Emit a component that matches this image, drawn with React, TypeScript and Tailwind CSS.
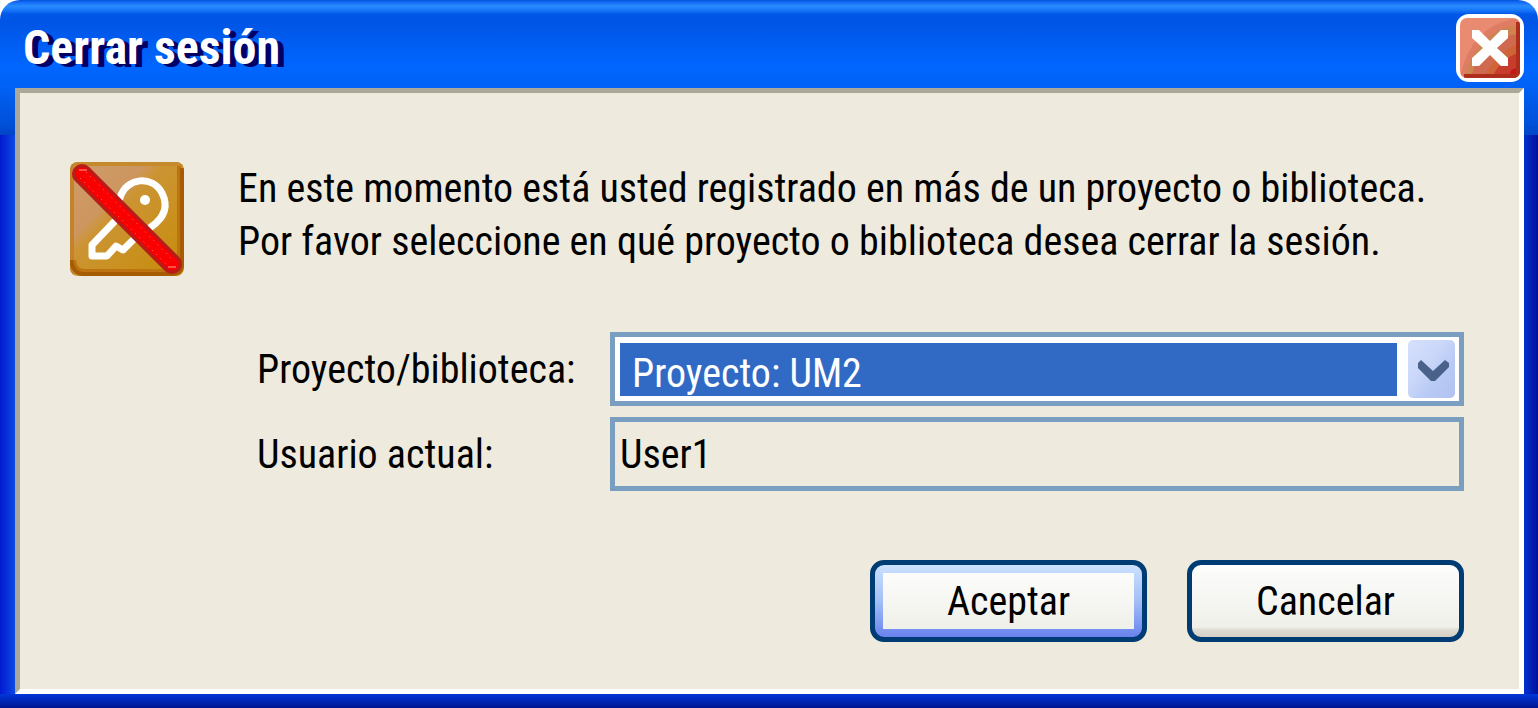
import { useState } from "react";

const sesiones = ["Proyecto: UM2"];

function KeyIcon() {
  return (
    <svg viewBox="0 0 114 114" className="size-[114px] shrink-0" aria-hidden="true">
      <defs>
        <linearGradient id="tile" x1="0" y1="0" x2="1" y2="1">
          <stop offset="0" stopColor="#c98a35" />
          <stop offset="0.12" stopColor="#cf9a66" />
          <stop offset="0.34" stopColor="#cd9660" />
          <stop offset="0.42" stopColor="#cc9433" />
          <stop offset="1" stopColor="#c68c08" />
        </linearGradient>
        <clipPath id="tileClip">
          <rect width="114" height="114" rx="8" />
        </clipPath>
      </defs>
      <g clipPath="url(#tileClip)">
        <rect width="114" height="114" fill="url(#tile)" />
        <path d="M0 2H114" stroke="#c48a2c" strokeWidth="4" />
        <path d="M2 0V114" stroke="#c4822a" strokeWidth="4" />
        <path d="M109 4V100Q109 109 100 109H14Q5 109 4 98" fill="none" stroke="#bd7410" strokeWidth="4" />
        <path d="M112 6V102Q112 112 102 112H12Q3 111 1 98" fill="none" stroke="#a55c02" strokeWidth="4" />
      </g>
      <g fill="none" stroke="#fff" strokeWidth="7" strokeLinejoin="round" strokeLinecap="round">
        <path d="M50 36C56 15 83 13 92 31C99 45 94 56 81 65" />
        <path d="M44 60L22 83V94H37L46 84L53 88L64 77" />
      </g>
      <circle cx="75" cy="38" r="5" fill="#fff" />
      <path d="M12 12L102 102" stroke="#b81b18" strokeWidth="20" strokeLinecap="round" />
      <path d="M12 12L102 102" stroke="#fb0000" strokeWidth="13" strokeLinecap="round" />
      <path d="M16 10L104 99M10 16L97 103" stroke="#ff7468" strokeWidth="1" strokeDasharray="1 5" />
      <path d="M9 8H17M98 105H106" stroke="#ffa090" strokeWidth="1" />
    </svg>
  );
}

function CloseIcon() {
  return (
    <svg viewBox="0 0 68 68" className="size-[68px]" aria-hidden="true">
      <defs>
        <clipPath id="closeClip">
          <rect x="4" y="4" width="60" height="60" rx="7" />
        </clipPath>
      </defs>
      <rect width="68" height="68" rx="13" fill="#fff" />
      <g clipPath="url(#closeClip)">
        <rect x="4" y="4" width="60" height="60" fill="#e98b71" />
        <path d="M4 64C10 32 28 8 64 4V64Z" fill="#de7d63" />
        <path d="M9 64C14 36 34 12 64 11V64Z" fill="#cf8350" />
        <path d="M15 64C20 42 35 22 64 20V64Z" fill="#cf694f" />
        <path d="M28 64C36 47 47 36 64 28V64Z" fill="#cf6536" />
        <path d="M36 64C42 50 50 43 64 38V64Z" fill="#c83c2d" />
        <path d="M54 61Q53 55 61 54V61Z" fill="#c71616" />
        <path d="M62 8V62H8" fill="none" stroke="#ae2d1b" strokeWidth="4" />
      </g>
      <path d="M16 16H23L34 27L45 16H52V24L41 34L52 44V52H45L34 41L23 52H16V44L27 34L16 24Z" fill="#fff" />
    </svg>
  );
}

function ArrowIcon() {
  return (
    <svg viewBox="0 0 47 58" className="h-[58px] w-[47px]" aria-hidden="true">
      <defs>
        <linearGradient id="arrowBg" x1="0" y1="0" x2="1" y2="1">
          <stop offset="0" stopColor="#d5e0fc" />
          <stop offset="0.4" stopColor="#cad7f9" />
          <stop offset="0.65" stopColor="#b9caf5" />
          <stop offset="1" stopColor="#b2c2f1" />
        </linearGradient>
      </defs>
      <rect width="47" height="58" rx="5" fill="url(#arrowBg)" />
      <path d="M10 23L13 20L25 31L37 20L41 23V27L27 41H23L10 28Z" fill="#4a628a" />
    </svg>
  );
}

export default function App() {
  const [sesion, setSesion] = useState(sesiones[0]);

  return (
    <div className="min-h-screen bg-white">
      <div className="flex min-h-screen flex-col rounded-t-[20px] bg-[linear-gradient(#0054d8,#1468f5_2px,#2a8cff_6px,#1878fa_10px,#0058e8_14px,#0055e5_22px,#0066ff_66px,#0062f6_85px,#0050d8_125px,#0044c8_135px),linear-gradient(#0038d8,#0026b8_7px,#001490_14px),linear-gradient(90deg,#001ad0,#0d4ae4_15px,#0030d0_calc(100%-14px),#00129a)] bg-[size:100%_135px,100%_14px,100%_100%] bg-[position:top,bottom,top] bg-no-repeat pr-[14px] pb-[14px] pl-[15px] font-['Roboto_Condensed','Liberation_Sans',sans-serif] text-[40px] leading-[53px] text-black">
        {/* TÍTULO */}
        <header className="flex h-[88px] items-center justify-between pt-2 pl-2">
          <h1 className="text-5xl font-bold text-white [text-shadow:6px_3px_0_#000066]">Cerrar sesión</h1>
          <button type="button" aria-label="Cerrar">
            <CloseIcon />
          </button>
        </header>

        <main className="flex grow flex-col border-5 border-t-[#aca899] border-r-white border-b-white border-l-[#aca899] bg-[#eeeade] pt-[69px] pr-[55px] pb-10 pl-[50px]">
          <div className="flex items-start gap-[54px]">
            <KeyIcon />
            <p>
              En este momento está usted registrado en más de un proyecto o biblioteca.
              <br />
              Por favor seleccione en qué proyecto o biblioteca desea cerrar la sesión.
            </p>
          </div>

          {/* CAMPOS */}
          <form className="mt-14 flex flex-col" onSubmit={(e) => e.preventDefault()}>
            <div className="grid grid-cols-[353px_1fr] items-center gap-y-[11px] pl-[187px]">
              <label htmlFor="sesion">Proyecto/biblioteca:</label>
              <div className="flex h-[74px] items-center gap-[11px] border-5 border-[#7a9ebf] bg-white pr-1 pl-[5px]">
                <select
                  id="sesion"
                  value={sesion}
                  onChange={(e) => setSesion(e.target.value)}
                  className="h-[53px] min-w-0 grow appearance-none rounded-none bg-[#316ac5] pt-1 pl-3 text-white"
                >
                  {sesiones.map((s) => (
                    <option key={s}>{s}</option>
                  ))}
                </select>
                <ArrowIcon />
              </div>

              <label htmlFor="usuario">Usuario actual:</label>
              <input
                id="usuario"
                readOnly
                value="User1"
                className="h-[74px] w-full min-w-0 border-5 border-[#7a9ebf] px-[5px]"
              />
            </div>

            {/* BOTONES */}
            <div className="mt-[69px] flex justify-end gap-10">
              <button
                type="submit"
                className="h-[82px] w-[277px] rounded-[14px] border-5 border-[#003c74] bg-linear-to-b from-[#cbe1ff] via-[#a3bff5] to-[#6a82ee] p-2"
              >
                <span className="flex h-full items-center justify-center bg-linear-to-b from-[#fcfcfb] to-[#f0f0ea]">
                  Aceptar
                </span>
              </button>
              <button
                type="button"
                className="h-[82px] w-[277px] rounded-[14px] border-5 border-[#003c74] bg-[linear-gradient(#ffffff,#fafaf9_10px,#f0f0ea_62px,#dfdbd2_65px,#d6d0c5)]"
              >
                Cancelar
              </button>
            </div>
          </form>
        </main>
      </div>
    </div>
  );
}
